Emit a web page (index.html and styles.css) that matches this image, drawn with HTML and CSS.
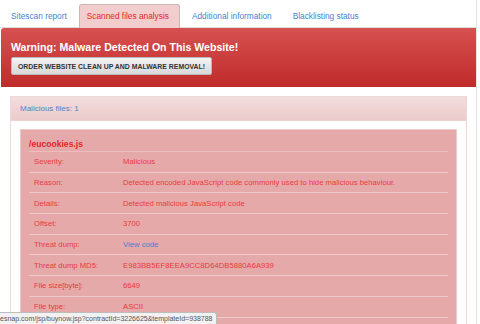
FILE: index.html
```html
<!DOCTYPE html>
<html lang="en">
<head>
    <meta charset="UTF-8">
    <meta name="viewport" content="width=device-width, initial-scale=1.0">
    <title>Scan results</title>
    <link rel="stylesheet" href="styles.css">
</head>
<body>
    <div class="page">
        <ul class="tabs">
            <li><a href="#">Sitescan report</a></li>
            <li class="active"><a href="#">Scanned files analysis</a></li>
            <li><a href="#">Additional information</a></li>
            <li><a href="#">Blacklisting status</a></li>
        </ul>

        <div class="warning">
            <h2>Warning: Malware Detected On This Website!</h2>
            <button class="order">ORDER WEBSITE CLEAN UP AND MALWARE REMOVAL!</button>
        </div>

        <div class="panel">
            <div class="panel-heading">Malicious files: 1</div>
            <div class="panel-body">
                <div class="file">
                    <h3>/eucookies.js</h3>
                    <table class="details">
                        <tr><td>Severity:</td><td>Malicious</td></tr>
                        <tr><td>Reason:</td><td>Detected encoded JavaScript code commonly used to hide malicious behaviour.</td></tr>
                        <tr><td>Details:</td><td>Detected malicious JavaScript code</td></tr>
                        <tr><td>Offset:</td><td>3700</td></tr>
                        <tr><td>Threat dump:</td><td><a href="#">View code</a></td></tr>
                        <tr><td>Threat dump MD5:</td><td>E983BB5EF8EEA9CC8D64DB5880A6A939</td></tr>
                        <tr><td>File size[byte]:</td><td>6649</td></tr>
                        <tr><td>File type:</td><td>ASCII</td></tr>
                    </table>
                </div>
            </div>
        </div>
    </div>

    <div class="statusbar">esnap.com/jsp/buynow.jsp?contractId=3226625&amp;templateId=938788</div>
</body>
</html>
```

FILE: styles.css
```css
body {
    margin: 0;
    font-family: "Liberation Sans", Arial, sans-serif;
    font-size: 8px;
    background: #ffffff;
    overflow: hidden;
    height: 324px;
}

.page {
    width: 476px;
    border-right: 1px solid #e4e4e4;
    height: 324px;
}

.tabs {
    list-style: none;
    margin: 0;
    padding: 4px 0 0 2px;
    display: flex;
    border-bottom: 1px solid #dddddd;
    height: 23px;
}

.tabs li {
    margin-right: 3px;
}

.tabs a {
    display: block;
    height: 23px;
    line-height: 23px;
    padding: 0 8px;
    color: #3f84cf;
    text-decoration: none;
    font-size: 8.3px;
    border: 1px solid transparent;
    border-radius: 3px 3px 0 0;
}

.tabs .active a {
    background: #f1cdcd;
    color: #e4252b;
    border: 1px solid #c9b6b6;
    border-bottom: none;
    padding: 0 10px 0 7px;
}

.warning {
    margin-left: 1px;
    height: 59px;
    box-sizing: border-box;
    padding: 12px 10px 0;
    background: linear-gradient(#d65150, #c02b2b);
    border-radius: 3px 0 0 0;
}

.warning h2 {
    margin: 0 0 3px;
    color: #ffffff;
    font-size: 10.6px;
    line-height: 14px;
}

.order {
    font-family: "Liberation Sans", Arial, sans-serif;
    font-size: 6.9px;
    font-weight: bold;
    color: #333333;
    height: 18px;
    padding: 0 6px;
    border: 1px solid #b9b9b9;
    border-radius: 2px;
    background: linear-gradient(#f4f4f4, #d8d8d8);
}

.panel {
    margin: 9px 9px 0 10px;
    border: 1px solid #efd8da;
    border-bottom: none;
}

.panel-heading {
    height: 23px;
    line-height: 23px;
    padding: 0 9px;
    color: #4a88c6;
    font-size: 8px;
    background: linear-gradient(#f3dddd, #ebcaca);
    border-bottom: 1px solid #ead0d0;
}

.panel-body {
    padding: 8px 9px 0;
}

.file {
    background: #e5a9a9;
    border: 1px solid #eccaca;
    border-bottom: none;
    padding: 8px 8px 0 8px;
    height: 200px;
}

.file h3 {
    margin: 0;
    color: #e4252b;
    font-size: 8.6px;
    line-height: 12px;
    padding-bottom: 1px;
    border-bottom: 1px solid #ebbfbf;
}

.details {
    width: 100%;
    border-collapse: collapse;
}

.details td {
    color: #ea3a3d;
    font-size: 7.7px;
    height: 19.7px;
    padding: 0 0 0 5px;
    border-bottom: 1px solid #efcaca;
    white-space: nowrap;
}

.details td:first-child {
    width: 84px;
}

.details a {
    color: #3f84cf;
    text-decoration: none;
}

.statusbar {
    position: fixed;
    left: 0;
    bottom: 0;
    height: 11px;
    line-height: 11px;
    padding: 0 3px 0 0;
    background: #f2f2f2;
    border: 1px solid #bcbcbc;
    border-left: none;
    border-bottom: none;
    border-radius: 0 3px 0 0;
    color: #555555;
    font-size: 7px;
    white-space: nowrap;
}
```
